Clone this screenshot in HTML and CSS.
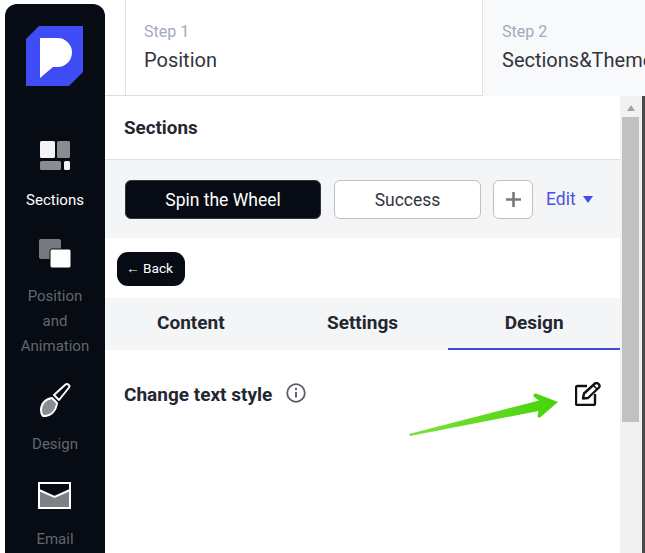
FILE: index.html
```html
<!DOCTYPE html>
<html lang="en">
<head>
    <meta charset="UTF-8">
    <meta name="viewport" content="width=device-width, initial-scale=1.0">
    <title>Sections</title>
    <link rel="stylesheet" href="styles.css">
</head>
<body>
    <div class="page">
        <nav class="sidebar">
            <svg class="logo" viewBox="0 0 57 60">
                <path fill="#3f4cf5" d="M13 0H57V46L43 60H0V13Z"/>
                <path fill="#fff" d="M14 12H31.500A14.500 14.500 0 0 1 31.500 41H27L14 52Z"/>
            </svg>
            <a class="nav-item active nav-sections">
                <svg class="nav-icon" viewBox="0 0 30 30">
                    <rect x="0" y="0" width="15" height="17" rx="1.5" fill="#f4f4f6"/>
                    <rect x="17" y="0" width="13" height="17" rx="1.5" fill="#8a8c91"/>
                    <rect x="0" y="20" width="21" height="9" rx="1.5" fill="#8a8c91"/>
                    <rect x="24" y="20" width="6" height="9" rx="1.5" fill="#f4f4f6"/>
                </svg>
                <span>Sections</span>
            </a>
            <a class="nav-item nav-position">
                <svg class="nav-icon icon-position" viewBox="0 0 33 30">
                    <rect x="0" y="0" width="22" height="20" rx="2" fill="#77797e"/>
                    <rect x="11" y="10" width="21" height="19" rx="2" fill="#fff" stroke="#060b14" stroke-width="1"/>
                </svg>
                <span>Position<br>and<br>Animation</span>
            </a>
            <a class="nav-item nav-design">
                <svg class="nav-icon icon-brush" viewBox="0 0 33 36">
                    <path fill="#8a8c91" stroke="#fff" stroke-width="2" stroke-linejoin="round" d="M13 16C6 17 2 22 2 28C2 31 3 33 4 34C11 34 17 30 18 21Z"/>
                    <path fill="none" stroke="#fff" stroke-width="2" stroke-linejoin="round" d="M15 13L26.500 2.500C28.500 1 31.500 3.500 30 5.500L20 18Z"/>
                </svg>
                <span>Design</span>
            </a>
            <a class="nav-item nav-email">
                <svg class="nav-icon icon-mail" viewBox="0 0 33 27">
                    <rect x="1" y="1" width="31" height="25" fill="#7e8085" stroke="#fff" stroke-width="2"/>
                    <path fill="#060b14" stroke="#fff" stroke-width="2" d="M1 1H32V8L16.5 15L1 8Z"/>
                </svg>
                <span>Email</span>
            </a>
        </nav>

        <main class="main">
            <div class="steps">
                <div class="step step-current">
                    <div class="step-num">Step 1</div>
                    <div class="step-name">Position</div>
                </div>
                <div class="step step-next">
                    <div class="step-num">Step 2</div>
                    <div class="step-name">Sections&amp;Themes</div>
                </div>
            </div>

            <div class="panel">
                <div class="panel-body">
                    <div class="panel-title">Sections</div>
                    <div class="section-bar">
                        <button class="sec-btn sec-active">Spin the Wheel</button>
                        <button class="sec-btn sec-plain">Success</button>
                        <button class="sec-add">
                            <svg viewBox="0 0 15 15"><path d="M7.5 0V15M0 7.5H15" stroke="#77797e" stroke-width="2.6"/></svg>
                        </button>
                        <span class="edit-link">Edit <i class="caret"></i></span>
                    </div>
                    <div class="back-row">
                        <button class="back-btn">← Back</button>
                    </div>
                    <div class="tabs">
                        <div class="tab">Content</div>
                        <div class="tab">Settings</div>
                        <div class="tab tab-active">Design</div>
                    </div>
                    <div class="style-row">
                        <span class="style-label">Change text style</span>
                        <svg class="info-icon" viewBox="0 0 20 20">
                            <circle cx="10" cy="10" r="8.8" fill="none" stroke="#5c5f66" stroke-width="1.8"/>
                            <circle cx="10" cy="6" r="1.2" fill="#5c5f66"/>
                            <path d="M10 9V14.5" stroke="#5c5f66" stroke-width="1.9"/>
                        </svg>
                        <svg class="edit-icon" viewBox="0 0 26 24">
                            <path fill="none" stroke="#111" stroke-width="2.4" stroke-linejoin="round" d="M12 4H2.5C1.6 4 1 4.6 1 5.5V21.5C1 22.4 1.6 23 2.500 23H18.500C19.400 23 20 22.400 20 21.500V12"/>
                            <path fill="none" stroke="#111" stroke-width="2.4" stroke-linejoin="round" d="M8 16.500L9 11.500L20 1.500C21 .7 22 .7 23 1.500L24 2.500C24.800 3.500 24.800 4.500 24 5.500L13 16Z"/>
                            <path stroke="#111" stroke-width="1.6" d="M18.500 3.500L22 7"/>
                        </svg>
                    </div>
                </div>
                <div class="scrollbar">
                    <div class="scroll-up"></div>
                    <div class="scroll-thumb"></div>
                </div>
                <div class="edge"></div>
            </div>
        </main>

        <svg class="arrow" viewBox="0 0 150 46">
            <defs>
                <linearGradient id="arrowFill" x1="0" x2="1" y1="0" y2="0">
                    <stop offset="0" stop-color="#7fe03a"/>
                    <stop offset="1" stop-color="#45d40a"/>
                </linearGradient>
            </defs>
            <path fill="url(#arrowFill)" d="M0 44L130 10.500L124.500 6.500Q124 3 127 3.500L149 12L131 27.500Q129 28.500 128.500 26L129.500 21L1 46Z"/>
        </svg>
    </div>
</body>
</html>
```

FILE: styles.css
```css
* {
    box-sizing: border-box;
}

html, body {
    margin: 0;
    padding: 0;
    height: 100%;
    overflow: hidden;
    background-color: #fff;
}

body {
    font-family: Roboto, Arial, sans-serif;
    color: #212529;
}

.page {
    display: flex;
    position: relative;
    height: 553px;
    overflow: hidden;
}

/* left nav */
.sidebar {
    width: 100px;
    margin: 4px 0 0 5px;
    padding-top: 22px;
    flex-shrink: 0;
    display: flex;
    flex-direction: column;
    align-items: center;
    background-color: #060b14;
    border-radius: 12px 12px 0 0;
    overflow: hidden;
}

.logo {
    width: 57px;
    height: 60px;
    margin-right: 1px;
    flex-shrink: 0;
}

.nav-item {
    display: flex;
    flex-direction: column;
    align-items: center;
    flex-shrink: 0;
    font-size: 15px;
    line-height: 25px;
    text-align: center;
    color: #63676d;
}

.nav-item.active {
    color: #fff;
}

.nav-icon {
    width: 30px;
    height: 30px;
}

.nav-sections {
    margin-top: 55px;
}

.nav-sections .nav-icon {
    margin-bottom: 17px;
}

.nav-position {
    margin-top: 26px;
}

.icon-position {
    width: 33px;
    margin-bottom: 15px;
}

.nav-design {
    margin-top: 23px;
}

.icon-brush {
    width: 33px;
    height: 36px;
    margin-bottom: 14px;
}

.nav-email {
    margin-top: 25px;
}

.icon-mail {
    width: 33px;
    height: 27px;
    margin-bottom: 18px;
}

/* main column */
.main {
    flex: 1;
    min-width: 0;
    display: flex;
    flex-direction: column;
}

.steps {
    display: flex;
    height: 96px;
    padding-left: 20px;
    flex-shrink: 0;
    position: relative;
}

/* line under the gap left of step 1 */
.steps::before {
    content: "";
    position: absolute;
    left: 0;
    bottom: 0;
    width: 20px;
    border-bottom: 1px solid #ddd;
}

.step {
    padding: 21px 19px 0;
}

.step-current {
    width: 358px;
    padding-left: 18px;
    border-left: 1px solid #e2e2e2;
    border-right: 1px solid #e2e2e2;
    border-bottom: 1px solid #ddd;
}

.step-next {
    flex: 1;
    background-color: #f8f9fb;
    white-space: nowrap;
    overflow: hidden;
}

.step-num {
    font-size: 16px;
    line-height: 22px;
    color: #a3a9c0;
}

.step-name {
    margin-top: 3px;
    font-size: 20px;
    line-height: 28px;
    color: #32343e;
}

.panel {
    flex: 1;
    display: flex;
    min-height: 0;
}

.panel-body {
    flex: 1;
    min-width: 0;
}

.panel-title {
    height: 64px;
    padding: 21px 19px 0;
    font-size: 18.8px;
    line-height: 22px;
    font-weight: 700;
    border-bottom: 1px solid #dfe0e3;
    color: #222730;
}

.section-bar {
    display: flex;
    align-items: center;
    height: 78px;
    padding: 0 20px;
    background-color: #f4f5f7;
}

button {
    font-family: Roboto, Arial, sans-serif;
    cursor: pointer;
}

.sec-btn {
    height: 39px;
    padding-top: 2px;
    font-size: 17.5px;
    border-radius: 6px;
}

.sec-active {
    width: 196px;
    background-color: #060b14;
    border: 1px solid #33363c;
    color: #fff;
}

.sec-plain {
    width: 147px;
    margin-left: 13px;
    background-color: #fff;
    border: 1px solid #bfc0c4;
    color: #32343e;
}

.sec-add {
    display: flex;
    align-items: center;
    justify-content: center;
    width: 40px;
    height: 39px;
    margin-left: 12px;
    padding: 0;
    background-color: #fff;
    border: 1px solid #bfc0c4;
    border-radius: 6px;
}

.sec-add svg {
    width: 15px;
    height: 15px;
}

.edit-link {
    margin-left: 13px;
    font-size: 17.5px;
    color: #4d52e0;
    white-space: nowrap;
}

.caret {
    display: inline-block;
    margin-left: 3px;
    vertical-align: 2px;
    border-top: 7px solid #3f4cf5;
    border-left: 5px solid transparent;
    border-right: 5px solid transparent;
}

.back-row {
    display: flex;
    align-items: center;
    height: 60px;
    padding: 2px 0 0 12px;
}

.back-btn {
    width: 68px;
    height: 34px;
    padding: 0 3px 2px 0;
    font-size: 13.6px;
    color: #fff;
    background-color: #060b14;
    border: none;
    border-radius: 11px;
}

.tabs {
    display: flex;
    height: 52px;
    background-color: #f4f5f7;
}

.tab {
    flex: 1;
    text-align: center;
    font-size: 19px;
    line-height: 50px;
    font-weight: 700;
    color: #222730;
}

.tab-active {
    border-bottom: 2px solid #3f4cd8;
}

.style-row {
    display: flex;
    align-items: flex-start;
    padding: 32px 19px 0;
}

.style-label {
    font-size: 19px;
    line-height: 26px;
    font-weight: 700;
    color: #222730;
}

.info-icon {
    width: 20px;
    height: 20px;
    margin: 1px 0 0 14px;
}

.edit-icon {
    width: 26px;
    height: 24px;
    margin: 0 0 0 auto;
}

/* fake scrollbar */
.scrollbar {
    width: 22px;
    flex-shrink: 0;
    background-color: #f1f1f1;
    padding: 0 3px 0 2px;
}

.scroll-up {
    width: 0;
    height: 0;
    margin: 9px auto 0;
    border-bottom: 6px solid #a3a3a3;
    border-left: 4px solid transparent;
    border-right: 4px solid transparent;
}

.scroll-thumb {
    height: 305px;
    margin-top: 6px;
    background-color: #c1c1c1;
}

.edge {
    width: 3px;
    flex-shrink: 0;
    background-color: #4a4a4a;
}

/* annotation arrow, sits on top of the page */
.arrow {
    position: absolute;
    left: 409px;
    top: 390px;
    width: 150px;
    height: 46px;
}
```
